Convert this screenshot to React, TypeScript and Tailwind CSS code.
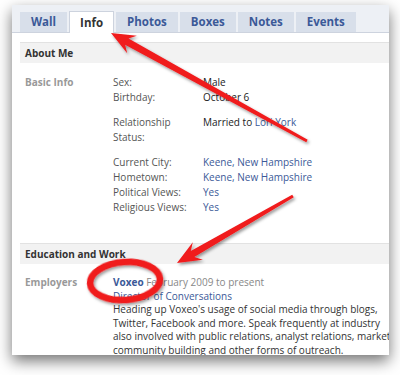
import type { ReactNode } from 'react';

// Points for a tapered arrow from tail to tip
type Pt = [number, number];
function arrowPoints(tail: Pt, tip: Pt, headLen = 24, headHalf = 10, neck = 18, shaftHead = 3.5, shaftTail = 1.5): string {
  const dx = tail[0] - tip[0];
  const dy = tail[1] - tip[1];
  const len = Math.hypot(dx, dy);
  const ux = dx / len;
  const uy = dy / len;
  const px = -uy;
  const py = ux;
  const at = (d: number, w: number): Pt => [tip[0] + ux * d + px * w, tip[1] + uy * d + py * w];
  const pts: Pt[] = [
    tip,
    at(headLen, headHalf),
    at(neck, shaftHead),
    [tail[0] + px * shaftTail, tail[1] + py * shaftTail],
    [tail[0] - px * shaftTail, tail[1] - py * shaftTail],
    at(neck, -shaftHead),
    at(headLen, -headHalf),
  ];
  return pts.map((p) => `${p[0].toFixed(1)},${p[1].toFixed(1)}`).join(' ');
}

const tabs = ['Wall', 'Info', 'Photos', 'Boxes', 'Notes', 'Events'];

function Row({ label, children }: { label: string; children: ReactNode }) {
  return (
    <div className="flex">
      <div className="w-[90px] shrink-0 text-[#555]">{label}</div>
      <div className="text-[#222]">{children}</div>
    </div>
  );
}

function Link({ children }: { children: ReactNode }) {
  return <span className="text-[#3b5998]">{children}</span>;
}

export default function App() {
  return (
    <div
      className="relative w-[400px] h-[375px] overflow-hidden bg-white"
      style={{ fontFamily: '"Open Sans", "DejaVu Sans", sans-serif' }}
    >
      <div className="ml-[12px] mt-[5px] w-[377px] h-[350px] overflow-hidden bg-white shadow-[0_6px_14px_rgba(0,0,0,0.55)]">
        {/* Tabs */}
        <div className="flex items-end gap-[2px] h-[28px] pl-[8px] bg-[#edf0f5] border-b border-[#cdd3de]">
          {tabs.map((t) =>
            t === 'Info' ? (
              <div
                key={t}
                className="h-[22px] -mb-px px-[10px] flex items-center bg-white border border-b-0 border-[#cdd3de] text-[11.5px] font-bold text-[#333]"
              >
                {t}
              </div>
            ) : (
              <div
                key={t}
                className="h-[20px] px-[11px] flex items-center bg-[#d8dfea] text-[11.5px] font-bold text-[#3b5998]"
              >
                {t}
              </div>
            )
          )}
        </div>

        <div className="pl-[8px] text-[10px] leading-[15px]">
          {/* About Me */}
          <div className="mt-[9px] h-[21px] flex items-center pl-[5px] bg-[#f2f2f2] border-t border-[#e2e2e2] font-bold text-[#333]">
            About Me
          </div>
          <div className="flex pl-[5px] mt-[12px]">
            <div className="w-[88px] shrink-0 font-bold text-[#999]">Basic Info</div>
            <div className="flex flex-col gap-[10px]">
              <div>
                <Row label="Sex:">Male</Row>
                <Row label="Birthday:">October 6</Row>
              </div>
              <Row label="Relationship Status:">
                Married to <Link>Lori York</Link>
              </Row>
              <div>
                <Row label="Current City:"><Link>Keene, New Hampshire</Link></Row>
                <Row label="Hometown:"><Link>Keene, New Hampshire</Link></Row>
                <Row label="Political Views:"><Link>Yes</Link></Row>
                <Row label="Religious Views:"><Link>Yes</Link></Row>
              </div>
            </div>
          </div>

          {/* Education and Work */}
          <div className="mt-[28px] h-[21px] flex items-center pl-[5px] bg-[#f2f2f2] border-t border-[#e2e2e2] font-bold text-[#333]">
            Education and Work
          </div>
          <div className="flex pl-[5px] mt-[12px] leading-[13.5px]">
            <div className="w-[88px] shrink-0 font-bold text-[#999]">Employers</div>
            <div className="whitespace-nowrap text-[#333]">
              <div>
                <span className="font-bold text-[#3b5998]">Voxeo</span>{' '}
                <span className="text-[#888]">February 2009 to present</span>
              </div>
              <div className="text-[#3b5998]">Director of Conversations</div>
              <div>Heading up Voxeo's usage of social media through blogs,</div>
              <div>Twitter, Facebook and more. Speak frequently at industry</div>
              <div>also involved with public relations, analyst relations, marketing,</div>
              <div>community building and other forms of outreach.</div>
            </div>
          </div>
        </div>
      </div>

      {/* Annotations */}
      <svg className="absolute inset-0 pointer-events-none" width="400" height="375" viewBox="0 0 400 375">
        <defs>
          <filter id="sh" x="-20%" y="-20%" width="140%" height="140%">
            <feDropShadow dx="1.5" dy="2" stdDeviation="1.5" floodColor="#000" floodOpacity="0.4" />
          </filter>
        </defs>
        <g filter="url(#sh)" fill="#f01a1c">
          <polygon points={arrowPoints([307, 141], [111, 33])} />
          <polygon points={arrowPoints([293, 196], [177, 263])} />
          <ellipse
            cx="125"
            cy="281"
            rx="35"
            ry="19"
            fill="none"
            stroke="#f01a1c"
            strokeWidth="6.5"
            transform="rotate(-4 125 281)"
          />
        </g>
      </svg>
    </div>
  );
}
